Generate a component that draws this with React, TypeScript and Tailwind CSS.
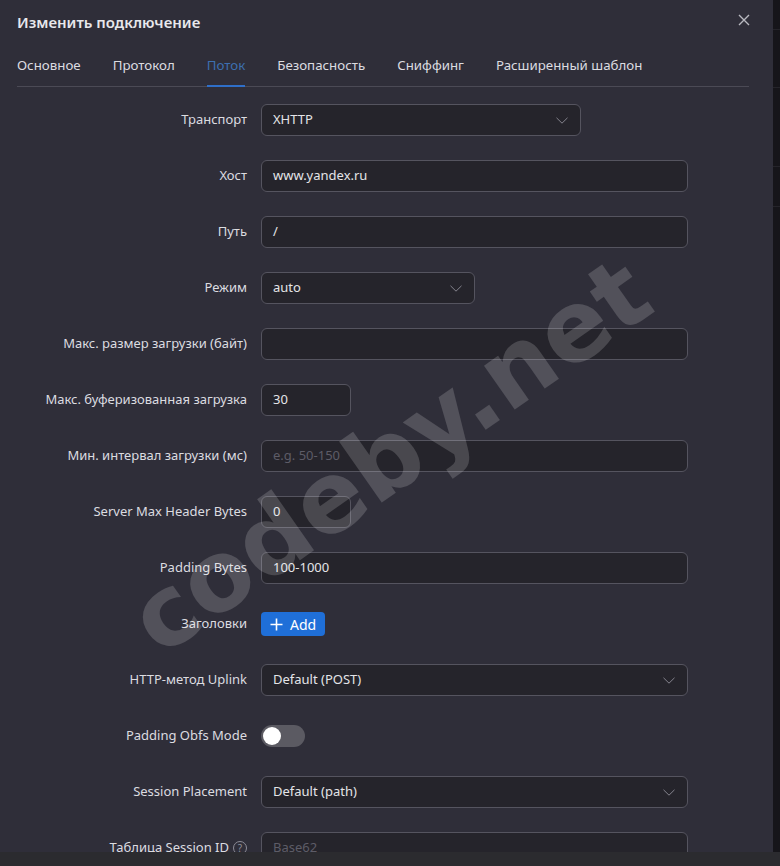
import type { ReactNode } from 'react'

const tabs = ['Основное', 'Протокол', 'Поток', 'Безопасность', 'Сниффинг', 'Расширенный шаблон']

function Chevron() {
  return (
    <svg width="12" height="7" viewBox="0 0 12 7" fill="none" stroke="#85848e" strokeWidth="1">
      <path d="M0.5 0.8L6 6.2L11.5 0.8" />
    </svg>
  )
}

function Row({ label, children }: { label: ReactNode; children: ReactNode }) {
  return (
    <div className="flex items-center h-[32px]">
      <div className="w-[244px] shrink-0 pr-[14px] flex justify-end items-center text-[13px] text-[#dcdce0] whitespace-nowrap">{label}</div>
      {children}
    </div>
  )
}

function Field({ value, placeholder, width = 'w-[427px]' }: { value?: string; placeholder?: string; width?: string }) {
  return (
    <div className={`${width} shrink-0 h-[32px] rounded-[6px] border border-[#55545f] bg-[#25242b] px-[11px] flex items-center text-[13px]`}>
      {value ? <span className="text-[#e4e4e8]">{value}</span> : <span className="text-[#5d5c67]">{placeholder}</span>}
    </div>
  )
}

function Select({ value, width = 'w-[427px]' }: { value: string; width?: string }) {
  return (
    <div className={`${width} shrink-0 h-[32px] rounded-[6px] border border-[#55545f] bg-[#25242b] pl-[11px] pr-[12px] flex items-center justify-between text-[13px]`}>
      <span className="text-[#e4e4e8]">{value}</span>
      <Chevron />
    </div>
  )
}

export default function App() {
  return (
    <div className="relative w-[780px] h-[866px] overflow-hidden bg-[#16151a] flex flex-col" style={{ fontFamily: '"Noto Sans", "Open Sans", sans-serif' }}>
      <div className="flex h-[852px]">
        <div className="w-[773px] h-[852px] bg-[#2f2e39] px-[17px] overflow-hidden">
          {/* header */}
          <div className="flex items-center justify-between h-[44px] pt-[1px]">
            <h2 className="text-[15px] font-semibold text-[#e8e8ec]">Изменить подключение</h2>
            <svg width="12" height="12" viewBox="0 0 12 12" stroke="#b9b9c0" strokeWidth="1.4" className="mr-[6px] mb-[6px]">
              <path d="M1 1l10 10M11 1L1 11" />
            </svg>
          </div>

          {/* tabs */}
          <div className="flex gap-8 w-[732px] border-b border-[#4b4a55] h-[43px] items-center text-[13.3px] pt-[1px]">
            {tabs.map(t => (
              <div key={t} className={`relative h-full flex items-center ${t === 'Поток' ? 'text-[#3d6fb0]' : 'text-[#dcdce0]'}`}>
                {t}
                {t === 'Поток' && <div className="absolute left-0 right-0 bottom-[-1px] h-[2px] bg-[#2f6fc9]" />}
              </div>
            ))}
          </div>

          {/* stream settings */}
          <div className="flex flex-col gap-[24px] pt-[17px]">
            <Row label="Транспорт"><Select value="XHTTP" width="w-[320px]" /></Row>
            <Row label="Хост"><Field value="www.yandex.ru" /></Row>
            <Row label="Путь"><Field value="/" /></Row>
            <Row label="Режим"><Select value="auto" width="w-[214px]" /></Row>
            <Row label="Макс. размер загрузки (байт)"><Field /></Row>
            <Row label="Макс. буферизованная загрузка"><Field value="30" width="w-[90px]" /></Row>
            <Row label="Мин. интервал загрузки (мс)"><Field placeholder="e.g. 50-150" /></Row>
            <Row label="Server Max Header Bytes"><Field value="0" width="w-[90px]" /></Row>
            <Row label="Padding Bytes"><Field value="100-1000" /></Row>
            <Row label="Заголовки">
              <button className="h-[24px] px-[9px] rounded-[4px] bg-[#1f6fd8] text-white text-[14px] flex items-center gap-[7px]">
                <svg width="13" height="13" viewBox="0 0 13 13" stroke="white" strokeWidth="1.6"><path d="M6.5 0.5v12M0.5 6.5h12" /></svg>
                Add
              </button>
            </Row>
            <Row label="HTTP-метод Uplink"><Select value="Default (POST)" /></Row>
            <Row label="Padding Obfs Mode">
              <div className="w-[44px] h-[22px] rounded-full bg-[#5b5a62] p-[2px] flex items-center">
                <div className="w-[18px] h-[18px] rounded-full bg-white" />
              </div>
            </Row>
            <Row label="Session Placement"><Select value="Default (path)" /></Row>
            <Row
              label={
                <span className="flex items-center gap-[4px]">
                  Таблица Session ID
                  <span className="w-[14px] h-[14px] rounded-full border border-[#8d8c97] text-[10px] leading-none flex items-center justify-center text-[#8d8c97]">?</span>
                </span>
              }
            >
              <Field placeholder="Base62" />
            </Row>
          </div>
        </div>

        {/* page behind the modal */}
        <div className="flex-1 flex flex-col">
          <div className="h-[30px] border-b border-[#25242a]" />
          <div className="h-[58px] border-b border-[#25242a]" />
          <div className="h-[79px] border-b border-[#25242a]" />
          <div className="h-[40px] border-b border-[#25242a]" />
        </div>
      </div>
      <div className="h-[14px] bg-[#2b2b2f]" />

      <div
        className="absolute left-[390px] top-[456px] -translate-x-1/2 -translate-y-1/2 -rotate-[35deg] text-[98px] font-bold text-white/[0.17] whitespace-nowrap pointer-events-none"
        style={{ fontFamily: '"DejaVu Sans", sans-serif' }}
      >
        codeby.net
      </div>
    </div>
  )
}
